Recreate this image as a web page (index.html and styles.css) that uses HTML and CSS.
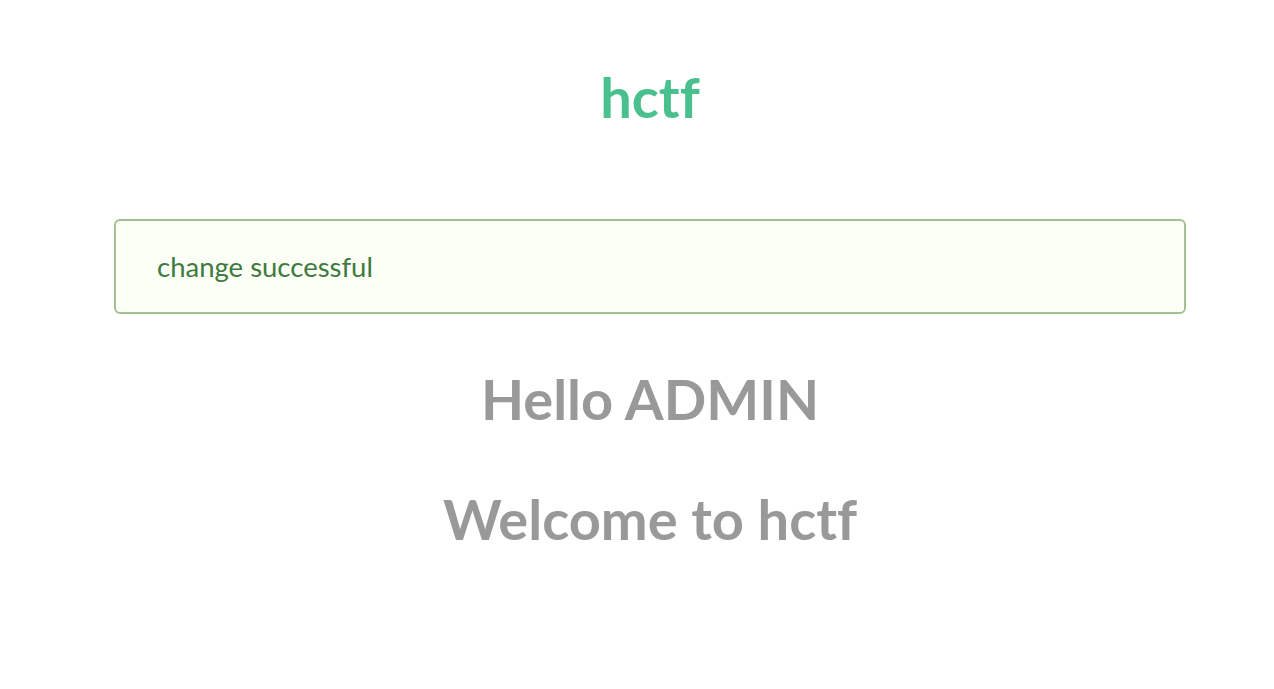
FILE: index.html
```html
<!DOCTYPE html>
<html>
<head>
<meta charset="utf-8">
<link rel="stylesheet" href="styles.css">
</head>
<body>
<div class="page">
  <h1 class="brand">hctf</h1>
  <div class="message">change successful</div>
  <h2 class="greet">Hello ADMIN</h2>
  <h2 class="greet">Welcome to hctf</h2>
</div>
</body>
</html>
```
FILE: styles.css
```css
html, body {
  margin: 0;
  padding: 0;
  background: #ffffff;
  font-family: Lato, "Open Sans", sans-serif;
  font-variant-ligatures: none;
  font-feature-settings: "liga" 0, "clig" 0, "calt" 0;
}
.page {
  width: 1072px;
  margin-left: 114px;
  padding-top: 61px;
  display: flex;
  flex-direction: column;
  align-items: stretch;
}
.brand {
  margin: 0;
  text-align: center;
  color: #4bc08f;
  font-weight: 700;
  font-size: 56px;
  line-height: 72px;
  font-kerning: none;
}
.message {
  margin-top: 86px;
  height: 95px;
  box-sizing: border-box;
  border: 2px solid #a3c293;
  border-radius: 6px;
  background: #fcfff5;
  color: #3f7a3f;
  font-size: 27.5px;
  padding: 0 41px;
  display: flex;
  align-items: center;
}
.greet {
  margin: 0;
  text-align: center;
  color: #999999;
  font-weight: 700;
  font-size: 56px;
  line-height: 70px;
}
.message + .greet {
  margin-top: 50px;
}
.greet + .greet {
  margin-top: 50px;
}
```
